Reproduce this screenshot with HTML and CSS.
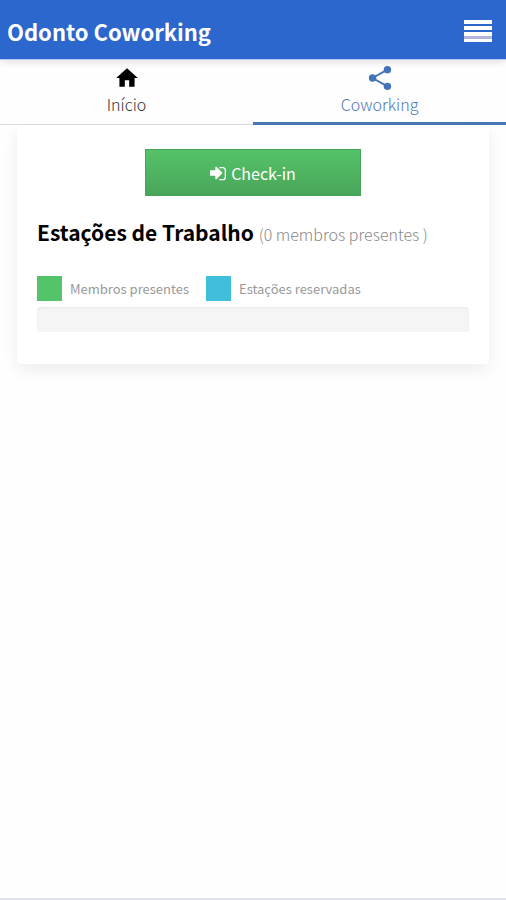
FILE: index.html
```html
<!DOCTYPE html>
<html lang="pt-BR">
<head>
  <meta charset="UTF-8">
  <meta name="viewport" content="width=device-width, initial-scale=1.0">
  <title>Odonto Coworking</title>
  <link rel="stylesheet" href="styles.css">
</head>
<body>
  <header class="topbar">
    <h1>Odonto Coworking</h1>
    <button type="button" class="menu-btn" aria-label="Menu">
      <svg viewBox="0 0 28 22">
        <path d="M0 0h28v4H0zM0 6h28v4H0zM0 12h28v10H0z" fill="#fff"/>
        <path d="M0 16h28v3H0z" fill="#b3b5df"/>
      </svg>
    </button>
  </header>

  <nav class="tabs">
    <a href="#inicio" class="tab">
      <svg class="tab-icon home" viewBox="0 0 24 24"><path d="M10 20v-6h4v6h5v-8h3L12 3 2 12h3v8z"/></svg>
      <span>Início</span>
    </a>
    <a href="#coworking" class="tab active">
      <svg class="tab-icon" viewBox="0 0 28 28">
        <path d="M22 5 6 14l16 9" fill="none" stroke="currentColor" stroke-width="2"/>
        <circle cx="22" cy="5" r="4"/>
        <circle cx="6" cy="14" r="4"/>
        <circle cx="22" cy="23" r="4"/>
      </svg>
      <span>Coworking</span>
    </a>
  </nav>

  <main>
    <section class="card">
      <button type="button" class="checkin">
        <svg class="signin" viewBox="0 0 1536 1536"><path d="M1184 768q0 26-19 45l-544 544q-19 19-45 19t-45-19-19-45v-288H64q-26 0-45-19T0 960V576q0-26 19-45t45-19h448V224q0-26 19-45t45-19 45 19l544 544q19 19 19 45zM1536 480v704q0 119-84 204t-204 84H928q-13 0-22-9t-10-23q0-32 4-64t28-32h320q66 0 113-47t47-113V480q0-66-47-113t-113-47H928q-20-1-27-11-9-49-1-94 5-22 28-23h320q119 0 204 84t84 204z"/></svg>
        Check-in
      </button>

      <h2>Estações de Trabalho <small>(0 membros presentes )</small></h2>

      <!-- Legenda -->
      <ul class="legend">
        <li><span class="box present"></span>Membros presentes</li>
        <li><span class="box reserved"></span>Estações reservadas</li>
      </ul>
      <div class="progress"></div>
    </section>
  </main>
</body>
</html>
```

FILE: styles.css
```css
* {
  box-sizing: border-box;
}
body {
  display: flex;
  flex-direction: column;
  min-height: 100vh;
  margin: 0;
  background-color: #fefefe;
  border-bottom: 2px solid #e2e2ee;
  font-family: "Noto Sans CJK JP", "Open Sans", sans-serif;
  font-size: 13px;
}
.topbar {
  position: relative;
  display: flex;
  align-items: center;
  justify-content: space-between;
  height: 60px;
  padding: 2px 14px 0 7px;
  background-color: #2c67cd;
  border-bottom: 1px solid #b9c8ee;
  box-shadow: 0 2px 8px rgba(0, 0, 0, 0.12);
}
.topbar h1 {
  margin: 0;
  color: #fff;
  font-size: 22px;
  line-height: 34px;
}
.menu-btn {
  padding: 0;
  background: none;
  border: none;
  cursor: pointer;
}
.menu-btn svg {
  display: block;
  width: 28px;
  height: 22px;
}
.tabs {
  display: flex;
}
.tab {
  flex: 1;
  display: flex;
  flex-direction: column;
  align-items: center;
  height: 65px;
  padding-top: 5px;
  border-bottom: 1px solid #dcdde3;
  color: #333;
  font-size: 16px;
  font-weight: 300;
  line-height: 24px;
  text-decoration: none;
}
.tab.active {
  color: #4373b8;
  border-bottom: 3px solid #4778b5;
}
.tab.active span {
  color: #5079bd;
}
.tab-icon {
  width: 26px;
  height: 26px;
  margin-bottom: 1px;
  fill: currentColor;
}
.tab-icon.home {
  color: #000;
}
.card {
  margin: 0 17px;
  padding: 24px 20px 32px;
  background-color: #fff;
  border-radius: 4px;
  box-shadow: 0 6px 16px rgba(0, 0, 0, 0.07);
}
.checkin {
  display: flex;
  align-items: center;
  justify-content: center;
  gap: 5px;
  width: 50%;
  height: 47px;
  margin: 0 auto;
  background: linear-gradient(#55c268, #49a65a);
  border: 1px solid #45a457;
  color: #fff;
  font-family: inherit;
  font-size: 16px;
  cursor: pointer;
}
.signin {
  width: 16px;
  height: 16px;
  fill: currentColor;
}
.card h2 {
  margin: 20px 0 26px;
  color: #000;
  font-size: 21px;
  line-height: 32px;
}
.card h2 small {
  color: #888;
  font-size: 16px;
  font-weight: 300;
}
.legend {
  display: flex;
  gap: 17px;
  margin: 0 0 6px;
  padding: 0;
  list-style: none;
  color: #999;
  line-height: 25px;
}
.legend li {
  display: flex;
  gap: 8px;
}
.box {
  width: 25px;
  height: 25px;
}
.present {
  background-color: #54c46a;
}
.reserved {
  background-color: #41bedb;
}
.progress {
  height: 25px;
  background-color: #f5f5f5;
  border-radius: 4px;
  box-shadow: inset 0 1px 2px rgba(0, 0, 0, 0.06);
}
```
